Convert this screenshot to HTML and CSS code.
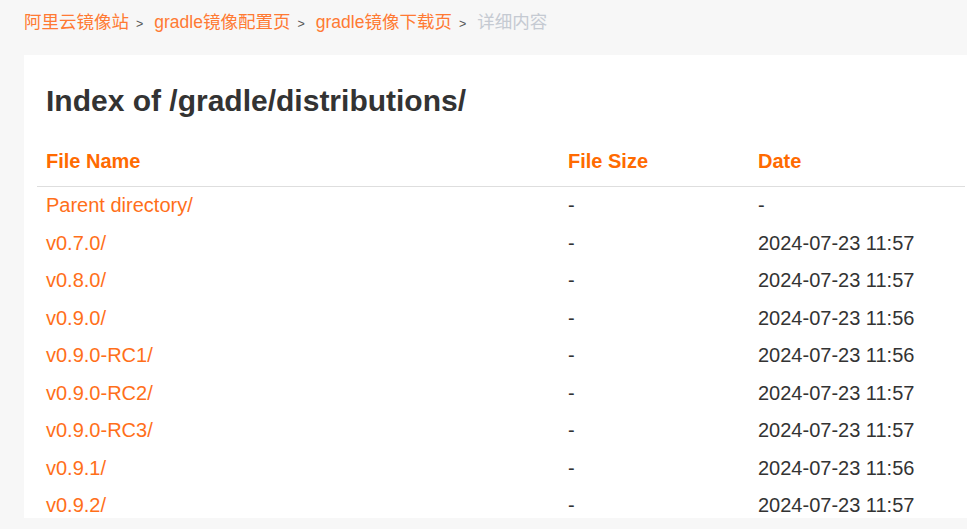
FILE: index.html
```html
<!DOCTYPE html>
<html lang="zh-CN">
<head>
<meta charset="utf-8">
<title>Index of /gradle/distributions/</title>
<link rel="stylesheet" href="styles.css">
</head>
<body>
<nav class="crumbs"><a class="crumb" href="#">阿里云镜像站</a><span class="sep">&gt;</span><a class="crumb" href="#">gradle镜像配置页</a><span class="sep">&gt;</span><a class="crumb" href="#">gradle镜像下载页</a><span class="sep">&gt;</span><span class="crumb current">详细内容</span></nav>
<main class="card">
  <h1 class="title">Index of /gradle/distributions/</h1>
  <div class="table">
    <div class="row head">
      <div class="cell">File Name</div>
      <div class="cell">File Size</div>
      <div class="cell">Date</div>
    </div>
    <div class="row"><a class="cell link" href="#">Parent directory/</a><div class="cell">-</div><div class="cell">-</div></div>
    <div class="row"><a class="cell link" href="#">v0.7.0/</a><div class="cell">-</div><div class="cell">2024-07-23 11:57</div></div>
    <div class="row"><a class="cell link" href="#">v0.8.0/</a><div class="cell">-</div><div class="cell">2024-07-23 11:57</div></div>
    <div class="row"><a class="cell link" href="#">v0.9.0/</a><div class="cell">-</div><div class="cell">2024-07-23 11:56</div></div>
    <div class="row"><a class="cell link" href="#">v0.9.0-RC1/</a><div class="cell">-</div><div class="cell">2024-07-23 11:56</div></div>
    <div class="row"><a class="cell link" href="#">v0.9.0-RC2/</a><div class="cell">-</div><div class="cell">2024-07-23 11:57</div></div>
    <div class="row"><a class="cell link" href="#">v0.9.0-RC3/</a><div class="cell">-</div><div class="cell">2024-07-23 11:57</div></div>
    <div class="row"><a class="cell link" href="#">v0.9.1/</a><div class="cell">-</div><div class="cell">2024-07-23 11:56</div></div>
    <div class="row"><a class="cell link" href="#">v0.9.2/</a><div class="cell">-</div><div class="cell">2024-07-23 11:57</div></div>
  </div>
</main>
</body>
</html>
```
FILE: styles.css
```css
html, body {
  margin: 0;
  padding: 0;
  height: 100%;
  overflow: hidden;
}
body {
  background: #f7f7f7;
  font-family: "Liberation Sans", Arial, "Noto Sans CJK SC", sans-serif;
  color: #333;
}
.crumbs {
  padding: 10px 24px 0;
  height: 24px;
  line-height: 24px;
  margin-bottom: 21px;
  font-size: 17.5px;
  white-space: nowrap;
}
.crumb {
  color: #ff7a33;
  text-decoration: none;
}
.crumb.current {
  color: #c5cad2;
}
.sep {
  display: inline-block;
  font-size: 12.5px;
  color: #555;
  margin: 0 11px 0 7px;
}
.card {
  background: #fff;
  margin-left: 24px;
  height: 463px;
  overflow: hidden;
  padding: 28px 0 0 13px;
  box-sizing: border-box;
}
.title {
  margin: 0 0 17px;
  padding-left: 9px;
  font-size: 30px;
  line-height: 36px;
  font-weight: bold;
  color: #333;
}
.row {
  display: grid;
  grid-template-columns: 522px 190px 1fr;
  font-size: 20px;
  line-height: 37.5px;
}
.cell {
  padding-left: 9px;
  white-space: nowrap;
  color: #333;
  text-decoration: none;
}
.row.head {
  line-height: 50px;
  border-bottom: 1px solid #dedede;
  margin-right: 2px;
}
.row.head .cell {
  color: #ff6a00;
  font-weight: bold;
}
.cell.link {
  color: #ff6f1a;
}
```
